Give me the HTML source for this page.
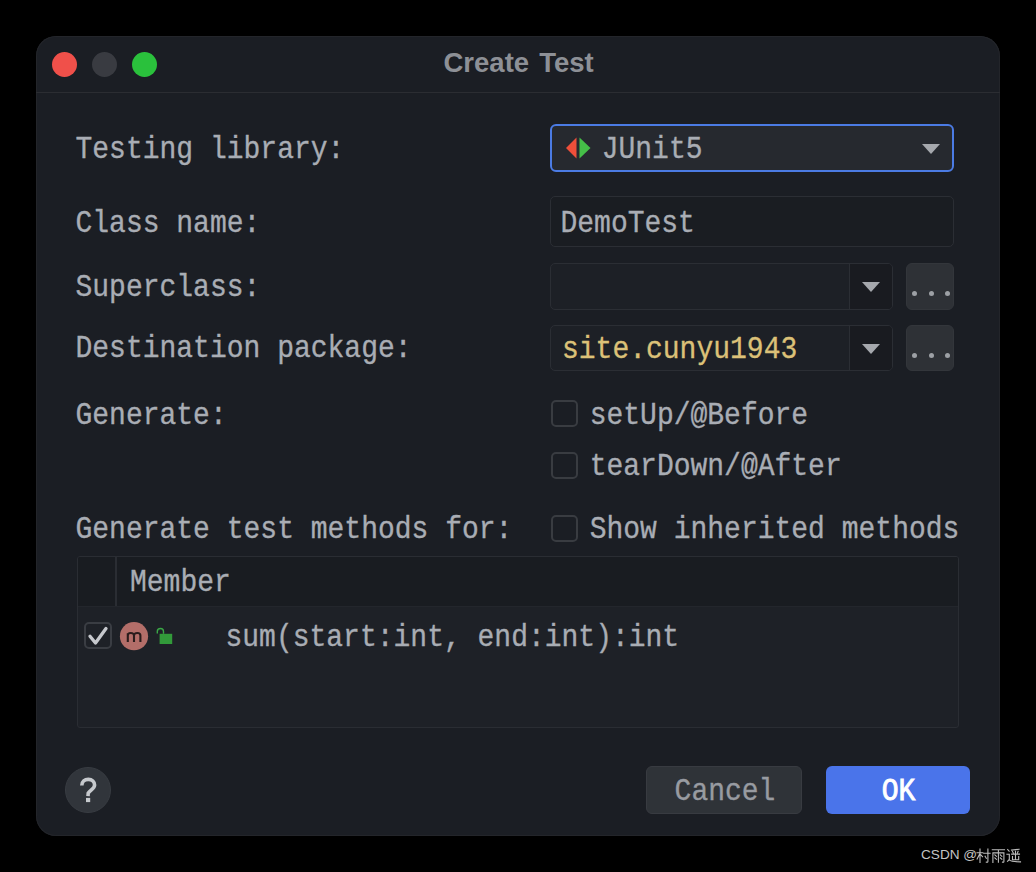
<!DOCTYPE html>
<html><head><meta charset="utf-8">
<style>
html,body{margin:0;padding:0;}
body{width:1036px;height:872px;background:#000;position:relative;overflow:hidden;font-family:"Liberation Mono",monospace;}
.win{position:absolute;left:36px;top:36px;width:964px;height:800px;border-radius:20px;background:#1b1e24;overflow:hidden;box-shadow:inset 0 0 0 1px #23252a;}
.abs{position:absolute;}
.t{position:absolute;font-family:"Liberation Mono",monospace;font-size:28px;line-height:32px;white-space:pre;color:#a9adb4;transform-origin:0 23.45px;transform:translateY(-1px) scaleY(1.11);-webkit-text-stroke:0.3px currentColor;}
.sep{position:absolute;left:0;top:56px;width:964px;height:1px;background:#2b2d32;}
.dot{position:absolute;width:25px;height:25px;border-radius:50%;}
.title{position:absolute;font-family:"Liberation Sans",sans-serif;font-weight:bold;font-size:27.5px;line-height:32px;color:#8d9096;white-space:pre;word-spacing:2.5px;}
.field{position:absolute;box-sizing:border-box;border:1px solid #2b2e34;border-radius:5px;background:#1a1d22;}
.btn3{position:absolute;box-sizing:border-box;border-radius:6px;background:#2e3136;border:1px solid #33363b;}
.cb{position:absolute;box-sizing:border-box;width:27px;height:27px;border:2px solid #393c41;border-radius:5px;}
.tri{position:absolute;width:0;height:0;border-left:9px solid transparent;border-right:9px solid transparent;border-top:10px solid #a5a8ad;}
.pd{position:absolute;width:5px;height:5px;border-radius:50%;background:#9da0a5;}
</style></head>
<body>
<div class="win">
  <div class="dot" style="left:15.5px;top:15.5px;background:#f0504a;"></div>
  <div class="dot" style="left:55.5px;top:15.5px;background:#393b41;"></div>
  <div class="dot" style="left:95.5px;top:15.5px;background:#2ac13c;"></div>
  <div class="title" id="title" style="left:407.5px;top:10.8px;">Create Test</div>
  <div class="sep"></div>
</div>

<!-- labels -->
<div class="t" style="left:75.5px;top:136px;">Testing library:</div>
<div class="t" style="left:75.5px;top:209.5px;">Class name:</div>
<div class="t" style="left:75.5px;top:273.5px;">Superclass:</div>
<div class="t" style="left:75.5px;top:335px;">Destination package:</div>
<div class="t" style="left:75.5px;top:402px;">Generate:</div>
<div class="t" style="left:75.5px;top:516px;">Generate test methods for:</div>

<!-- JUnit combo -->
<div class="abs" style="left:550px;top:124px;width:404px;height:48px;box-sizing:border-box;border:2px solid #4b7be4;border-radius:6px;background:#26292f;"></div>
<svg class="abs" style="left:560px;top:132px;" width="40" height="32" viewBox="0 0 40 32">
  <polygon points="6,16 16.5,5.5 16.5,26.5" fill="#ee4f3a"/>
  <polygon points="19.5,5.5 30.5,16 19.5,26.5" fill="#45bf48"/>
</svg>
<div class="t" style="left:601.7px;top:135.7px;">JUnit5</div>
<div class="tri" style="left:922px;top:143.5px;"></div>

<!-- Class name -->
<div class="field" style="left:550px;top:196px;width:404px;height:51px;"></div>
<div class="t" style="left:560.5px;top:209.5px;">DemoTest</div>

<!-- Superclass -->
<div class="field" style="left:550px;top:263px;width:343px;height:46.5px;background:#1d2026;overflow:hidden;"><div class="abs" style="left:298px;top:0;width:45px;height:46px;background:#191b20;border-left:1px solid #2b2e34;"></div></div>
<div class="tri" style="left:861.5px;top:281.5px;"></div>
<div class="btn3" style="left:906px;top:263px;width:48px;height:47px;"></div>
<div class="pd" style="left:911.7px;top:290.5px;"></div>
<div class="pd" style="left:928.9px;top:290.5px;"></div>
<div class="pd" style="left:945.3px;top:290.5px;"></div>

<!-- Destination -->
<div class="field" style="left:550px;top:324.5px;width:343px;height:46.5px;background:#1d2026;overflow:hidden;"><div class="abs" style="left:298px;top:0;width:45px;height:46px;background:#191b20;border-left:1px solid #2b2e34;"></div></div>
<div class="tri" style="left:861.5px;top:344px;"></div>
<div class="t" style="left:562px;top:336px;color:#dcc178;">site.cunyu1943</div>
<div class="btn3" style="left:906px;top:324.5px;width:48px;height:46.5px;"></div>
<div class="pd" style="left:911.7px;top:353.4px;"></div>
<div class="pd" style="left:928.9px;top:353.4px;"></div>
<div class="pd" style="left:945.3px;top:353.4px;"></div>

<!-- checkboxes -->
<div class="cb" style="left:550.5px;top:400px;"></div>
<div class="t" style="left:589.7px;top:401.5px;">setUp/@Before</div>
<div class="cb" style="left:550.5px;top:452px;"></div>
<div class="t" style="left:589.7px;top:453px;">tearDown/@After</div>
<div class="cb" style="left:550.5px;top:514.5px;"></div>
<div class="t" style="left:589.7px;top:516px;">Show inherited methods</div>

<!-- table -->
<div class="abs" style="left:76.5px;top:556px;width:882px;height:171.5px;box-sizing:border-box;border:1px solid #2a2d33;border-radius:3px;background:#1e2127;overflow:hidden;">
  <div class="abs" style="left:0;top:0;width:882px;height:49px;background:#191c21;border-bottom:1px solid #23262c;"></div>
  <div class="abs" style="left:37.5px;top:0;width:1.5px;height:49px;background:#2a2d33;"></div>
</div>
<div class="t" style="left:130px;top:569px;">Member</div>
<div class="abs" style="left:84.3px;top:622.3px;width:27.5px;height:27px;box-sizing:border-box;border:2px solid #3a3d43;border-radius:5px;background:#1e2127;"></div>
<svg class="abs" style="left:84.5px;top:623px;" width="27" height="27" viewBox="0 0 27 27">
  <polyline points="5,13.2 10.5,20 21,5.5" fill="none" stroke="#c6c8cd" stroke-width="3.3" stroke-linecap="round" stroke-linejoin="round"/>
</svg>
<svg class="abs" style="left:119px;top:621px;" width="60" height="30" viewBox="0 0 60 30">
  <circle cx="15" cy="15.2" r="14.1" fill="#b36e69"/>
  <path d="M8.8 21 V12.2 M8.8 14.5 Q8.8 12 11.6 12 Q15 12 15 14.5 V21 M15 14.5 Q15 12 18.4 12 Q21.4 12 21.4 14.5 V21" fill="none" stroke="#2a1c1c" stroke-width="2.1"/>
  <rect x="40.6" y="12.8" width="12.6" height="10.2" fill="#329a3a"/>
  <path d="M38.3 12.5 V10.5 Q38.3 7.5 41.5 7.5 Q44.5 7.5 44.5 10.5 V12.8" fill="none" stroke="#3aa846" stroke-width="1.4"/>
</svg>
<div class="t" style="left:225.5px;top:624px;">sum(start:int, end:int):int</div>

<!-- help -->
<div class="abs" style="left:65px;top:767px;width:46px;height:46px;box-sizing:border-box;border-radius:50%;background:#31353b;border:1px solid #383c42;"></div>
<svg class="abs" style="left:65px;top:767px;" width="46" height="46" viewBox="0 0 46 46"><path d="M16.8 18.6 C16.8 14.2 19.8 12.4 23.3 12.4 C27.2 12.4 29.6 14.8 29.6 18 C29.6 21.8 24.8 23.2 23.2 26.2 L23 29.2" fill="none" stroke="#c6c9cd" stroke-width="3.6"/><rect x="21" y="30.9" width="4.2" height="4.2" fill="#c6c9cd"/></svg>

<!-- buttons -->
<div class="abs" style="left:646px;top:766px;width:156px;height:48px;box-sizing:border-box;border-radius:6px;background:#2f3338;border:1px solid #383b41;"></div>
<div class="t" style="left:647px;top:778px;width:156px;text-align:center;color:#989ba1;">Cancel</div>
<div class="abs" style="left:826px;top:766px;width:144px;height:48px;box-sizing:border-box;border-radius:6px;background:#4a74ea;"></div>
<div class="t" style="left:826.5px;top:778px;width:144px;text-align:center;color:#ffffff;-webkit-text-stroke:0.8px #fff;">OK</div>

<!-- watermark -->
<div class="abs" id="wm" style="left:921px;top:847px;font-family:'Liberation Sans',sans-serif;font-size:13.6px;line-height:16px;color:#c4c4c4;white-space:pre;">CSDN @</div>
<svg class="abs" style="left:976px;top:847.5px;" width="46" height="16" viewBox="0 0 46 16" fill="none" stroke="#bdbdbd" stroke-width="1.1" stroke-linecap="square">
  <g transform="translate(0.5,0.5)"><path d="M0.5 4.2 H6.3 M3.5 0.5 V14 M3.4 5 L0.6 10.5 M3.8 5.8 L6 8.2 M7.2 4.8 H13.6 M11.4 0.5 V13 Q11.4 14 9.8 13.6 M8.6 7.8 L9.8 9.8"/></g>
  <g transform="translate(15.5,0.5)"><path d="M0.8 1.2 H13 M6.9 1.2 V13.6 M1.4 4.4 V14 M1.4 4.4 H12.4 V13 Q12.4 14 11 13.6 M3.4 6.4 L5 7.8 M3.4 9.4 L5 10.8 M8.8 6.4 L10.4 7.8 M8.8 9.4 L10.4 10.8"/></g>
  <g transform="translate(30.5,0.5)"><path d="M1.2 1 L2.6 2.6 M0.4 5.8 H2.8 V11 L1 12.8 M2.6 11.4 Q5 13.4 14 13.4 M5 1.6 L12.6 0.8 M6 3 L6.8 4.4 M9 2.8 V4.4 M11.6 2.8 L11 4.4 M5.2 5.6 H13 M9 5.6 V11.2 M6 8 V11.2 H12.2 V8"/></g>
</svg>
</body></html>
